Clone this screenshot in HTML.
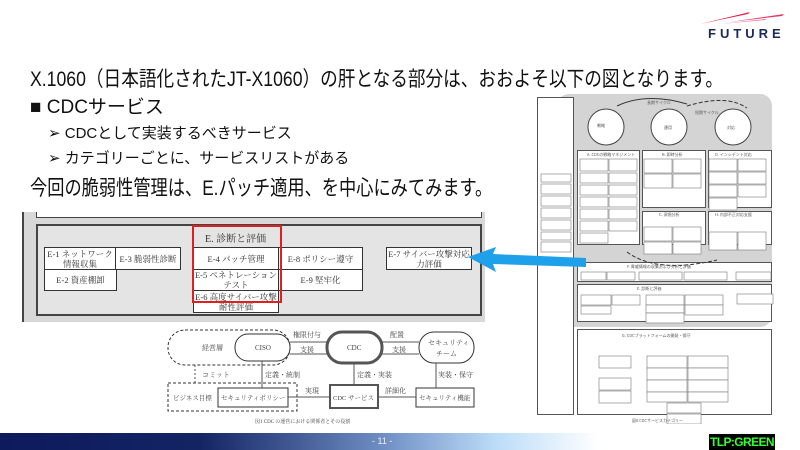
<!DOCTYPE html>
<html><head><meta charset="utf-8"><style>
*{margin:0;padding:0;box-sizing:border-box}
body{width:800px;height:450px;overflow:hidden;background:#fff;position:relative;font-family:"Liberation Sans","Noto Sans CJK JP",sans-serif;color:#111}
.a{position:absolute;white-space:nowrap}
.bx{position:absolute;border:1px solid #333;background:#fff;font-family:"Liberation Serif","Noto Serif CJK SC",serif;font-size:8.5px;color:#333;display:flex;align-items:center;justify-content:center;text-align:center;line-height:10px;white-space:nowrap;overflow:hidden}
.s{position:absolute;border:1px solid #555;background:#fff}
</style></head><body>
<svg class="a" style="left:700px;top:8px" width="100" height="20"><polygon points="0,16 48,6 50,4" fill="#e8204f"/><polygon points="30,14 82,8 84,6" fill="#e8204f" opacity=".9"/><polygon points="20,16 65,12 66,11" fill="#f06080"/></svg>
<div class="a" style="left:708px;top:26px;font-size:13px;font-weight:bold;letter-spacing:4px;color:#1a2a5e">FUTURE</div>

<div class="a" style="left:30px;top:63px;font-size:21px;transform:scaleX(0.84);transform-origin:0 0">X.1060（日本語化されたJT-X1060）の肝となる部分は、おおよそ以下の図となります。</div>
<div class="a" style="left:30px;top:92px;font-size:19px">■ CDCサービス</div>
<div class="a" style="left:48px;top:122px;font-size:15px">➢ CDCとして実装するべきサービス</div>
<div class="a" style="left:48px;top:147px;font-size:15px">➢ カテゴリーごとに、サービスリストがある</div>
<div class="a" style="left:30px;top:172px;font-size:21px;transform:scaleX(0.82);transform-origin:0 0">今回の脆弱性管理は、E.パッチ適用、を中心にみてみます。</div>

<div class="a" style="left:22px;top:212px;width:463px;height:110px;background:#d8d8d8;border-left:2px solid #444"></div>
<div class="a" style="left:36px;top:212px;width:446px;height:6px;border:1px solid #444;border-top:none;background:#fff"></div>
<div class="a" style="left:36px;top:224px;width:446px;height:92px;border:2px solid #444;background:#e4e4e4"></div>
<div class="a" style="left:205px;top:230px;font-family:'Liberation Serif','Noto Serif CJK SC',serif;font-size:10px;color:#333">E. 診断と評価</div>
<div class="bx" style="left:44px;top:247px;width:72px;height:23px">E-1 ネットワーク<br>情報収集</div>
<div class="bx" style="left:115px;top:247px;width:66px;height:23px">E-3 脆弱性診断</div>
<div class="bx" style="left:44px;top:269px;width:73px;height:22px">E-2 資産棚卸</div>
<div class="bx" style="left:193px;top:247px;width:86px;height:23px">E-4 パッチ管理</div>
<div class="bx" style="left:193px;top:269px;width:86px;height:22px">E-5 ペネトレーション<br>テスト</div>
<div class="bx" style="left:193px;top:290px;width:86px;height:23px">E-6 高度サイバー攻撃<br>耐性評価</div>
<div class="bx" style="left:278px;top:247px;width:85px;height:23px">E-8 ポリシー遵守</div>
<div class="bx" style="left:278px;top:269px;width:85px;height:22px">E-9 堅牢化</div>
<div class="bx" style="left:386px;top:247px;width:86px;height:23px">E-7 サイバー攻撃対応<br>力評価</div>
<div class="a" style="left:192px;top:225px;width:90px;height:78px;border:2px solid #e02020"></div>

<svg class="a" style="left:160px;top:325px" width="330" height="100" font-family="Liberation Serif,Noto Serif CJK SC,serif" font-size="7" fill="#444">
<rect x="8" y="5" width="122" height="35" rx="17" fill="none" stroke="#333" stroke-dasharray="3,2"/>
<rect x="75" y="9" width="55" height="27" rx="13" fill="#fff" stroke="#333"/>
<rect x="167" y="7" width="55" height="31" rx="15" fill="#fff" stroke="#555" stroke-width="3"/>
<rect x="259" y="7" width="55" height="31" rx="15" fill="#fff" stroke="#333"/>
<rect x="8" y="58" width="129" height="28" fill="none" stroke="#333" stroke-dasharray="3,2"/>
<rect x="58" y="63" width="70" height="19" fill="#fff" stroke="#333"/>
<rect x="170" y="60" width="48" height="23" fill="#fff" stroke="#555" stroke-width="2"/>
<rect x="256" y="63" width="58" height="19" fill="#fff" stroke="#333"/>
<g stroke="#555" fill="none"><path d="M130 17H167M130 29H167M222 17H259M222 29H259M102 36V63M194 38V60M276 38V63M170 72H128M218 72H256"/><path d="M35 40V58" stroke-dasharray="2,2"/></g>
<text x="42" y="25">経営層</text><text x="95" y="25">CISO</text><text x="187" y="25">CDC</text>
<text x="268" y="20">セキュリティ</text><text x="276" y="31">チーム</text>
<text x="133" y="12">権限付与</text><text x="140" y="27">支援</text><text x="230" y="12">配置</text><text x="232" y="27">支援</text>
<text x="42" y="52">コミット</text><text x="105" y="52">定義・統制</text><text x="197" y="52">定義・実装</text><text x="278" y="52">実装・保守</text>
<text x="13" y="75" font-size="6.5">ビジネス目標</text><text x="61" y="75" font-size="6.5">セキュリティポリシー</text><text x="173" y="75" font-size="6.5">CDC サービス</text><text x="259" y="75" font-size="6.5">セキュリティ機能</text>
<text x="145" y="68">実現</text><text x="225" y="68">詳細化</text>
<text x="95" y="98" font-size="5">図1 CDC の運営における関係者とその役割</text>
</svg>

<div class="a" style="left:557px;top:94px;width:215px;height:233px;background:#d4d4d4;border-radius:12px"></div>
<div class="s" style="left:537px;top:97px;width:37px;height:318px"></div>
<div class="s" style="left:577px;top:150px;width:63px;height:95px"></div>
<div class="s" style="left:642px;top:150px;width:64px;height:58px"></div>
<div class="s" style="left:708px;top:150px;width:64px;height:58px"></div>
<div class="s" style="left:642px;top:211px;width:64px;height:34px"></div>
<div class="s" style="left:708px;top:211px;width:64px;height:34px"></div>
<div class="s" style="left:577px;top:262px;width:195px;height:20px"></div>
<div class="s" style="left:577px;top:284px;width:195px;height:38px"></div>
<div class="s" style="left:577px;top:329px;width:195px;height:86px"></div>
<svg class="a" style="left:537px;top:94px" width="240" height="330">
<g fill="#fff" stroke="#444"><circle cx="69" cy="33" r="18"/><circle cx="132" cy="33" r="18"/><circle cx="196" cy="33" r="18"/></g>
<g fill="none" stroke="#333"><path d="M80 12Q110 -2 150 10"/><path d="M150 12Q190 0 210 14" stroke-dasharray="4,2"/><path d="M90 158Q120 180 180 166" stroke-dasharray="4,2"/></g>
<g fill="#fff" stroke="#777" stroke-width=".6">
<rect x="4" y="80" width="30" height="8"/><rect x="4" y="90" width="30" height="10"/><rect x="4" y="102" width="30" height="10"/><rect x="4" y="114" width="30" height="10"/><rect x="4" y="126" width="30" height="10"/><rect x="4" y="138" width="30" height="8"/><rect x="4" y="148" width="30" height="10"/>
<rect x="43" y="65" width="28" height="12"/><rect x="72" y="65" width="28" height="12"/><rect x="43" y="79" width="28" height="10"/><rect x="72" y="79" width="28" height="10"/><rect x="43" y="91" width="28" height="10"/><rect x="72" y="91" width="28" height="10"/><rect x="43" y="103" width="28" height="10"/><rect x="72" y="103" width="28" height="10"/><rect x="43" y="115" width="28" height="10"/><rect x="72" y="115" width="28" height="10"/><rect x="43" y="127" width="28" height="10"/><rect x="72" y="127" width="28" height="10"/><rect x="43" y="139" width="28" height="10"/>
<rect x="107" y="65" width="28" height="14"/><rect x="136" y="65" width="28" height="14"/><rect x="107" y="80" width="28" height="14"/><rect x="136" y="80" width="28" height="14"/>
<rect x="172" y="65" width="28" height="12"/><rect x="201" y="65" width="28" height="12"/><rect x="172" y="78" width="28" height="12"/><rect x="201" y="78" width="28" height="12"/><rect x="172" y="91" width="28" height="12"/><rect x="201" y="91" width="28" height="12"/><rect x="172" y="104" width="28" height="12"/>
<rect x="107" y="133" width="28" height="14"/><rect x="136" y="133" width="28" height="14"/><rect x="107" y="148" width="28" height="12"/><rect x="136" y="148" width="28" height="12"/>
<rect x="172" y="138" width="28" height="18"/><rect x="201" y="138" width="28" height="18"/>
<rect x="44" y="178" width="25" height="8"/><rect x="70" y="178" width="28" height="8"/><rect x="102" y="178" width="43" height="8"/><rect x="147" y="178" width="43" height="8"/><rect x="199" y="178" width="35" height="8"/>
<rect x="44" y="201" width="30" height="10"/><rect x="75" y="201" width="28" height="10"/><rect x="44" y="212" width="30" height="8"/><rect x="109" y="201" width="38" height="10"/><rect x="148" y="201" width="38" height="10"/><rect x="109" y="211" width="38" height="8"/><rect x="148" y="211" width="38" height="10"/><rect x="109" y="219" width="38" height="10"/><rect x="200" y="200" width="36" height="10"/>
<rect x="62" y="262" width="32" height="12"/><rect x="62" y="284" width="32" height="12"/><rect x="62" y="297" width="32" height="12"/>
<rect x="110" y="262" width="40" height="12"/><rect x="151" y="262" width="40" height="12"/><rect x="110" y="274" width="40" height="12"/><rect x="151" y="274" width="40" height="12"/><rect x="110" y="286" width="40" height="12"/><rect x="151" y="286" width="40" height="12"/><rect x="110" y="298" width="40" height="10"/><rect x="151" y="298" width="40" height="10"/><rect x="130" y="309" width="34" height="10"/><rect x="130" y="320" width="34" height="10"/>
</g>
<g font-size="4" fill="#555" font-family="Noto Sans CJK JP,sans-serif"><text x="60" y="33">戦略</text><text x="127" y="35">運用</text><text x="190" y="35">対応</text><text x="110" y="10">長期サイクル</text><text x="158" y="20">短期サイクル</text><text x="50" y="62">A. CDCの戦略マネジメント</text><text x="125" y="62">B. 即時分析</text><text x="178" y="62">D. インシデント対応</text><text x="122" y="122">C. 深堀分析</text><text x="178" y="122">H. 内部不正対応支援</text><text x="90" y="174">F. 脅威情報の収集および分析と評価</text><text x="100" y="196">E. 診断と評価</text><text x="85" y="243">G. CDCプラットフォームの開発・保守</text><text x="95" y="328">図8 CDCサービスカテゴリー</text></g>
</svg>

<svg class="a" style="left:466px;top:245px" width="122" height="30"><polygon points="2,12 30,2 27,9 120,13 120,22 27,19 30,27" fill="#1ea0ea"/></svg>

<div class="a" style="left:0;top:433px;width:800px;height:17px;background:linear-gradient(90deg,#0d1a5c 0%,#142463 25%,#6f8fc4 48%,#bcdcf8 62%,#fff 75%)"></div>
<div class="a" style="left:372px;top:436px;font-size:9px;color:#eef">- 11 -</div>
<div class="a" style="left:709px;top:434px;width:66px;height:16px;background:#000;color:#3f3;font-size:12px;font-weight:bold;text-align:center;line-height:16px;letter-spacing:-0.6px">TLP:GREEN</div>
</body></html>
